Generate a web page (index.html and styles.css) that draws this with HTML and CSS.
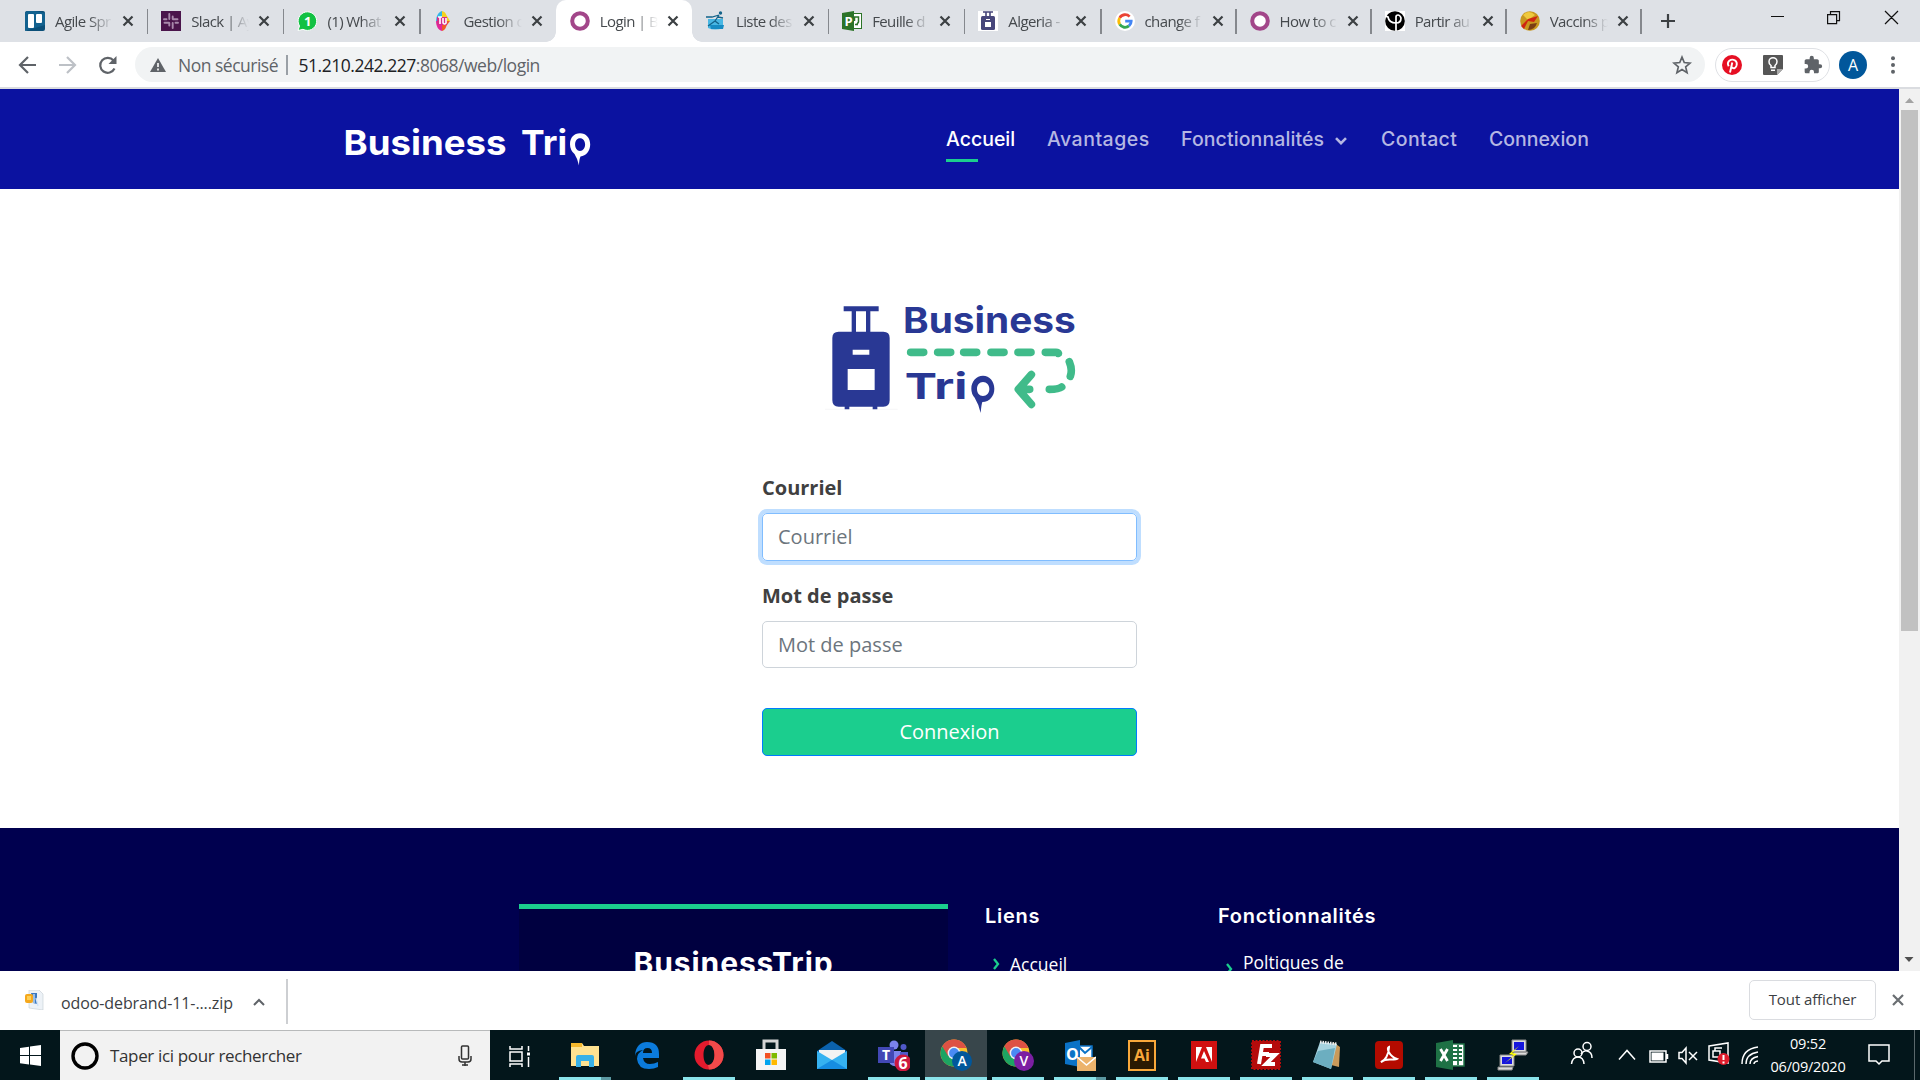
FILE: index.html
```html
<!DOCTYPE html>
<html lang="fr">
<head>
<meta charset="utf-8">
<title>Login | Business Trip</title>
<link rel="stylesheet" href="styles.css">
</head>
<body>
<svg class="defs" width="0" height="0">
  <symbol id="close" viewBox="0 0 12 12"><path d="M1.5 1.5l9 9M10.5 1.5l-9 9" stroke="#3c4043" stroke-width="2.2" fill="none"/></symbol>
  <symbol id="ring" viewBox="0 0 20 20"><circle cx="10" cy="10" r="7.8" fill="#fff" stroke="#a24689" stroke-width="4"/></symbol>
  <symbol id="chrome" viewBox="0 0 32 32">
    <circle cx="14" cy="14" r="13.5" fill="#fbc02d"/>
    <path d="M14 14L2.3 7.2A13.5 13.5 0 0 0 13 27.5l6-10z" fill="#1da462"/>
    <path d="M2.3 7.2A13.5 13.5 0 0 1 26.5 9H14L8 17z" fill="#dd5144"/>
    <circle cx="14" cy="14" r="6.4" fill="#f1f1f1"/><circle cx="14" cy="14" r="4.9" fill="#4a8af4"/>
  </symbol>
</svg>

<header class="tabs">
  <div class="tab"><svg class="fav" viewBox="0 0 20 20"><rect width="20" height="20" rx="2" fill="#0b4f78"/><path d="M0 20L20 14V2L10 0H2L0 2z" fill="#13628f"/><rect x="3" y="3" width="6" height="14" rx="1" fill="#fff"/><rect x="11" y="3" width="6" height="9" rx="1" fill="#fff"/></svg><span class="tt">Agile Spr</span><svg class="x"><use href="#close"/></svg></div>
  <div class="tab"><svg class="fav" viewBox="0 0 20 20"><rect width="20" height="20" fill="#4a154b"/><g stroke="#a98aac" stroke-width="1.900" stroke-linecap="round"><path d="M8.300 3v5M3 8.300h2.500M11.700 5.500v2.500M12 8.300h4.500M3.500 11.700h4.500M8.300 12v2.500M11.700 12v5M14.500 11.700h2.500"/></g></svg><span class="tt">Slack | Ay</span><svg class="x"><use href="#close"/></svg></div>
  <div class="tab"><svg class="fav" viewBox="0 0 20 20"><path d="M1 19.500L2.500 15A9.300 9.300 0 1 1 6 18.300z" fill="#12c143" stroke="#fff"/><text x="7" y="14.500" class="favtext">1</text></svg><span class="tt">(1) What</span><svg class="x"><use href="#close"/></svg></div>
  <div class="tab nosep"><svg class="fav" viewBox="0 0 20 20"><path d="M8 0C4 1 2 6 2 10h6z" fill="#35b5e8"/><path d="M8 0c4 1 4 4 5 5l3 5H8z" fill="#f4d21f"/><path d="M2 10c0 5 2 9 6 10V10z" fill="#e3259b"/><path d="M8 20c4-1 4-5 5-6l3-4H8z" fill="#ef5a28"/><path d="M3 6h10v8H3z" fill="#d62d8b"/><path d="M4 6h4M6 6v7M9 7v5q2 2 3 0V7" stroke="#fff" stroke-width="1.600" fill="none"/></svg><span class="tt">Gestion d</span><svg class="x"><use href="#close"/></svg></div>
  <div class="tab active"><svg class="fav"><use href="#ring"/></svg><span class="tt">Login | B</span><svg class="x"><use href="#close"/></svg></div>
  <div class="tab"><svg class="fav" viewBox="0 0 20 20"><path d="M2 8h15v9q-8 3-15 0z" fill="#48b7e4"/><path d="M4 14h14l-1 4H5z" fill="#168bc3"/><path d="M0 6l6 0 7-2M13 4L9 10l4 3M9 10L2 15M12 6l5 1" stroke="#12638a" stroke-width="1.300" fill="none"/><circle cx="14.500" cy="2" r="1.700" fill="#12638a"/></svg><span class="tt">Liste des</span><svg class="x"><use href="#close"/></svg></div>
  <div class="tab"><svg class="fav" viewBox="0 0 20 20"><rect x="9" y="2.500" width="10.500" height="15" fill="#fff" stroke="#2c7428"/><path d="M12.500 10V6h4v5l-2 3M13 13.500h3" stroke="#2c7428" stroke-width="1.500" fill="none"/><path d="M0 2L12 0v20L0 18z" fill="#2c7428"/><text x="2.500" y="14.500" class="favtext">P</text></svg><span class="tt">Feuille d</span><svg class="x"><use href="#close"/></svg></div>
  <div class="tab"><svg class="fav" viewBox="0 0 20 20"><path fill="#fff" d="M0 0h20v20H0z"/><path d="M5 1h10M8 1v5M12 1v5" stroke="#47467b" stroke-width="1.600"/><rect x="3" y="5" width="14" height="14" rx="1.500" fill="#47467b"/><path d="M7 11h6v5H7zM8 8h4v1H8z" fill="#fff"/></svg><span class="tt">Algeria -</span><svg class="x"><use href="#close"/></svg></div>
  <div class="tab late"><svg class="fav" viewBox="0 0 20 20"><circle cx="10" cy="10" r="10" fill="#fff"/><g fill="none" stroke-width="2.800"><path d="M14.600 5.600A6.200 6.200 0 0 0 4.700 6.900" stroke="#ea4335"/><path d="M4.700 6.900a6.200 6.200 0 0 0 0 6.400" stroke="#fbbc05"/><path d="M4.700 13.300a6.200 6.200 0 0 0 9.300 1.600" stroke="#34a853"/><path d="M14 14.900a6.200 6.200 0 0 0 2.200-4.700H10.200" stroke="#4285f4"/></g></svg><span class="tt">change f</span><svg class="x"><use href="#close"/></svg></div>
  <div class="tab late"><svg class="fav"><use href="#ring"/></svg><span class="tt">How to c</span><svg class="x"><use href="#close"/></svg></div>
  <div class="tab late"><svg class="fav" viewBox="0 0 20 20"><path fill="#fff" d="M0 0h20v20H0z"/><circle cx="10" cy="10" r="9.800" fill="#000"/><path d="M11 20V6q0-2 2-2t3 3q0 5-5 5-7 0-8-6L0 5" stroke="#fff" stroke-width="1.700" fill="none"/></svg><span class="tt">Partir au</span><svg class="x"><use href="#close"/></svg></div>
  <div class="tab late"><svg class="fav" viewBox="0 0 20 20"><circle cx="10" cy="10" r="9.800" fill="#c8971f"/><path d="M3 4q6-6 12 0l-7 5z" fill="#efc93d"/><path d="M1 15l7-7 10-3-4 6-6-1-4 8z" fill="#cf2412"/><path d="M10 13l7-1q-2 7-9 7z" fill="#7a3d14"/></svg><span class="tt">Vaccins p</span><svg class="x"><use href="#close"/></svg></div>
  <svg class="plus" width="16" height="16" viewBox="0 0 16 16"><path d="M8 1v14M1 8h14" stroke="#3c4043" stroke-width="2.200"/></svg>
  <svg class="winctl" width="130" height="16" viewBox="0 0 130 16" fill="none" stroke="#111" stroke-width="1.200"><path d="M0 7.500h13M56.600 5.600h9v9h-9zM59.500 5.500V2.600h9v9h-3M114 2l13 13M127 2l-13 13"/></svg>
</header>

<div class="toolbar">
  <svg class="navicons" width="135" height="36" viewBox="0 0 135 36" fill="none" stroke-width="2.200"><path d="M36 18H20M28 10l-8 8 8 8" stroke="#5f6368"/><path d="M59 18h16M67 10l8 8-8 8" stroke="#bdc1c6"/><path d="M114.500 21.500a7.500 7.500 0 1 1-1-8" stroke="#5f6368"/><path d="M116.500 9v8h-8z" fill="#5f6368"/></svg>
  <div class="omnibox">
    <svg width="16" height="14" viewBox="0 0 16 14"><path d="M8 0l8 14H0z" fill="#5f6368"/><path d="M8 5v4M8 10.500v2" stroke="#fff" stroke-width="1.600"/></svg>
    <span class="nonsec">Non sécurisé</span><i class="osep"></i><span class="url"><b>51.210.242.227</b>:8068/web/login</span>
    <svg class="star" width="20" height="20" viewBox="0 0 24 24"><path d="M12 2.500l2.700 6.600 7.100.6-5.400 4.600 1.700 7L12 17.500l-6.100 3.800 1.700-7-5.400-4.600 7.100-.6z" fill="none" stroke="#5f6368" stroke-width="2"/></svg>
  </div>
  <div class="exts">
    <svg width="20" height="20" viewBox="0 0 20 20"><circle cx="10" cy="10" r="10" fill="#e60f23"/><path d="M6.700 11.300Q4.800 8 7.300 5.800q2.700-2 5.500-.5 3 2 1.500 5.800-1.500 3-3.800 1.800l-1-1M10.300 7.500L8 17.500" stroke="#fff" stroke-width="1.900" fill="none"/></svg>
    <svg width="20" height="20" viewBox="0 0 20 20"><path d="M1 0h18q1 0 1 1v13l-6 6H1q-1 0-1-1V1q0-1 1-1z" fill="#565656"/><path d="M14 20v-6h6z" fill="#aaa"/><path d="M8 12.500v-2Q5.800 9 6 6.700a4 4 0 0 1 8 0Q14 9 12 10.500v2zM8 15.300h4" fill="none" stroke="#fff" stroke-width="1.500"/></svg>
    <svg width="20" height="20" viewBox="0 0 24 24"><path d="M20.500 11H19V7c0-1.100-.9-2-2-2h-4V3.500a2.500 2.500 0 0 0-5 0V5H4c-1.100 0-2 .9-2 2v3.800h1.500a2.700 2.700 0 0 1 0 5.400H2V20c0 1.100.9 2 2 2h3.800v-1.500a2.700 2.700 0 0 1 5.400 0V22H17c1.100 0 2-.9 2-2v-4h1.500a2.500 2.500 0 0 0 0-5z" fill="#5f6368"/></svg>
  </div>
  <div class="avatar">A</div>
  <svg class="dots" width="4" height="18" viewBox="0 0 4 18" fill="#5f6368"><circle cx="2" cy="2.300" r="2"/><circle cx="2" cy="9" r="2"/><circle cx="2" cy="15.700" r="2"/></svg>
</div>

<div class="viewport">
  <main class="page">
    <div class="site-header">
      <svg class="brand" width="260" height="50" viewBox="0 0 260 50" fill="#fff"><text x="9.500" y="30" textLength="163" lengthAdjust="spacingAndGlyphs">Business</text><text x="187" y="30" textLength="46" lengthAdjust="spacingAndGlyphs">Tri</text><path fill-rule="evenodd" d="M246 8.300c6 0 10.200 4.800 10.200 11.300S252 31 246.500 31.500q-1.500 3-1.500 9-1.500-7-4.500-11.500-4.500-4-4.500-9.800c0-6.500 4-10.900 10-10.900zm0 5c-3 0-4.900 2.700-4.900 6.200s1.900 6.400 4.900 6.400 5.100-2.900 5.100-6.400-2.100-6.200-5.100-6.200z"/></svg>
      <nav class="menu">
        <a class="on m1">Accueil</a><a class="m2">Avantages</a><a class="m3">Fonctionnalités</a><svg class="caret" width="12" height="8" viewBox="0 0 12 8"><path d="M1 1.200l5 5 5-5" stroke="#b5b7e3" stroke-width="2.600" fill="none"/></svg><a class="m4">Contact</a><a class="m5">Connexion</a>
      </nav>
    </div>
    <section class="login">
      <svg class="logo" width="320" height="150" viewBox="0 0 960 450">
        <path d="M75 388H293" stroke="#f2f2f4" stroke-width="2"/>
        <g fill="#293894"><path d="M131 79h105v15h-25v63h-13V94h-30v63h-13V94h-24z"/><path fill-rule="evenodd" d="M116 155h134q19 0 19 19v187q0 19-19 19h-18v8h-14v-8h-70v8h-14v-8h-18q-19 0-19-19V174q0-19 19-19zm42 54v15h50v-15zm-15 58v63h81v-63z"/>
        <text x="309" y="159" textLength="518" lengthAdjust="spacingAndGlyphs">Business</text><text x="314" y="357" textLength="188" lengthAdjust="spacingAndGlyphs">Tri</text>
        <path fill-rule="evenodd" d="M549 287c20 0 34 17 34 39s-14 39-36 40q-3 8-5 33-4-23-18-46-10-11-10-27c0-22 15-39 35-39zm0 19c-11 0-18 9-18 21s7 21 18 21 19-9 19-21-8-21-19-21z"/></g>
        <g fill="none" stroke="#40bb8a" stroke-width="23" stroke-linecap="round" stroke-linejoin="round"><path d="M332 217h39M413 217h39M491 217h39M573 217h39M654 217h39M736 217h32q6 0 7 3M808 245q10 24 3 44M785 321q-9 7-37 7M694 284l-39 44 39 45M660 328h29"/></g>
      </svg>
      <form class="form">
        <label>Courriel</label>
        <div class="field focus">Courriel</div>
        <label>Mot de passe</label>
        <div class="field second">Mot de passe</div>
        <div class="submit">Connexion</div>
      </form>
    </section>
    <footer class="footer">
      <div class="card"><h3>BusinessTrip</h3></div>
      <div class="col c1"><h4>Liens</h4><p><svg width="7" height="12" viewBox="0 0 7 12"><path d="M1 1l4 5-4 5" stroke="#1bce8e" stroke-width="2.300" fill="none"/></svg><span>Accueil</span></p></div>
      <div class="col c2"><h4>Fonctionnalités</h4><p><svg width="7" height="12" viewBox="0 0 7 12"><path d="M1 1l4 5-4 5" stroke="#1bce8e" stroke-width="2.300" fill="none"/></svg><span>Poltiques de</span></p></div>
    </footer>
  </main>
  <div class="scroll"><svg width="21" height="21" viewBox="0 0 21 21"><path d="M6 14l4.500-5 4.500 5z" fill="#a3a3a3"/></svg><div class="thumb"></div><svg class="down" width="21" height="21" viewBox="0 0 21 21"><path d="M5.500 7l4.500 5 4.500-5z" fill="#505050"/></svg></div>
</div>

<div class="downloads">
  <svg class="zip" width="20" height="20" viewBox="0 0 20 20"><path d="M4 0h10l4 4v16L4 18z" fill="#edf2f7" stroke="#c4ccd3" stroke-width=".6"/><path d="M6 3h6v11l-4-1z" fill="#3a79c2"/><path d="M9 4v9M11 8l2 8" stroke="#cfe2f8" stroke-width="1.300"/><rect y="4" width="8" height="9" rx="2" fill="#f5a81c"/><path d="M2 6h4v4H2z" fill="#ffcf55"/></svg>
  <span class="fname">odoo-debrand-11-....zip</span>
  <svg class="up" width="12" height="8" viewBox="0 0 12 8"><path d="M1 7l5-5 5 5" stroke="#5f6368" stroke-width="2" fill="none"/></svg>
  <i class="dsep"></i>
  <span class="showall">Tout afficher</span>
  <svg class="dx" width="12" height="12" viewBox="0 0 12 12"><path d="M1 1l10 10M11 1L1 11" stroke="#6a6e72" stroke-width="2.200"/></svg>
</div>

<div class="taskbar">
  <div class="start"><svg width="21" height="21" viewBox="0 0 21 21" fill="#fff"><path d="M0 3l9-1.300V10H0zM10 1.500L21 0v10H10zM0 11h9v8.500L0 18.200zM10 11h11v10l-11-1.500z"/></svg></div>
  <div class="search"><svg width="28" height="28" viewBox="0 0 28 28"><circle cx="14" cy="14" r="12" fill="none" stroke="#000" stroke-width="3.400"/></svg><span>Taper ici pour rechercher</span><svg class="mic" width="14" height="21" viewBox="0 0 14 21" fill="none" stroke="#333" stroke-width="1.500"><rect x="3.500" y="1" width="7" height="13" rx="1"/><path d="M1 11v3q0 3 3 3h6q3 0 3-3v-3M7 17v4M4 20h6"/></svg></div>
  <div class="taskview"><svg width="22" height="22" viewBox="0 0 22 22" fill="none" stroke="#fff" stroke-width="1.500"><path d="M1 1v3h12V1M1 7h12v9H1zM1 22v-3h12v3M19.500 1v5M19.500 12v10"/><path d="M18 7.500h3v3h-3z" fill="#fff" stroke="none"/></svg></div>
  <div class="apps">
    <div class="app run multi"><svg viewBox="0 0 32 32"><path d="M2 4h11l2 3h15v20H2z" fill="#ffe391"/><path d="M2 4h11v4H2z" fill="#f6b92d"/><path d="M7 28V18q0-2 2-2h14q2 0 2 2v10h-5v-6h-8v6z" fill="#38b1e7"/></svg></div>
    <div class="app"><svg viewBox="0 0 32 32"><path d="M4 15Q6 3 16 3q12 0 12 12v4H12q1 6 7 6 4 0 8-2v5q-4 2-9 2-11 0-12-10 0-6 6-9-8 1-8 6zM12 14h9q0-5-4.500-5T12 14z" fill="#0b7bdc" fill-rule="evenodd"/></svg></div>
    <div class="app run"><svg viewBox="0 0 32 32"><path fill-rule="evenodd" d="M16 1.500a14.500 14.500 0 1 0 0 29 14.500 14.500 0 0 0 0-29zm0 4.500c3.500 0 5.500 4.500 5.500 10S19.500 26 16 26s-5.500-4.500-5.500-10S12.500 6 16 6z" fill="#e31b2d"/><path d="M16 1.500a14.500 14.500 0 0 1 0 29l-1-4.600c4 0 6.500-4.400 6.500-9.900S19 6 16 6z" fill="#f24a4a"/></svg></div>
    <div class="app"><svg viewBox="0 0 32 32"><path d="M9 11V2h13v9" fill="none" stroke="#d5d5d5" stroke-width="3"/><path d="M1 10h30v21H1z" fill="#f5f5f5"/><path d="M10 14h5.500v5.500H10z" fill="#f25022"/><path d="M16.500 14H22v5.500h-5.500z" fill="#7fba00"/><path d="M10 20.500h5.500V26H10z" fill="#00a4ef"/><path d="M16.500 20.500H22V26h-5.500z" fill="#ffb900"/></svg></div>
    <div class="app"><svg viewBox="0 0 32 32"><path d="M1 12L16 2l15 10v18H1z" fill="#0b62ad"/><path d="M3 11h26v12H3z" fill="#f3f3f3"/><path d="M1 12l15 9 15-9v18H1z" fill="#36b2f1"/><path d="M1 30l15-9 15 9z" fill="#168de2"/></svg></div>
    <div class="app run"><svg viewBox="0 0 32 32"><circle cx="16" cy="6" r="4.500" fill="#7b83eb"/><circle cx="25.500" cy="8" r="3" fill="#5059c9"/><path d="M9 12h14v12q-5 6-11 1z" fill="#7b83eb"/><path d="M22 13h8v10h-8z" fill="#5059c9"/><path d="M0 8h16v16H0z" fill="#4248b5"/><text x="4" y="21" class="t14">T</text><circle cx="25" cy="24" r="8.500" fill="#cc193f"/><text x="20.500" y="30" class="t16">6</text></svg></div>
    <div class="app run current"><svg viewBox="0 0 32 32"><use href="#chrome"/><circle cx="22" cy="22" r="10" fill="#01579b"/><text x="17.500" y="27" class="t14n">A</text></svg></div>
    <div class="app run"><svg viewBox="0 0 32 32"><use href="#chrome"/><circle cx="22" cy="22" r="10" fill="#7b1fa2"/><text x="17.500" y="27" class="t14n">V</text></svg></div>
    <div class="app run multi"><svg viewBox="0 0 32 32"><path d="M14 7h14v14H14z" fill="#fff" stroke="#0b72c6" stroke-width="1.500"/><path d="M15 8l6 6 7-6" fill="none" stroke="#0b72c6" stroke-width="2"/><path d="M1 4l15-3v27L1 25z" fill="#0b72c6"/><text x="2" y="21" class="t16">O</text><path d="M13 18h19v14H13z" fill="#ecb36c"/><path d="M13 18l9.500 8 9.500-8" fill="none" stroke="#fff" stroke-width="1.500"/></svg></div>
    <div class="app run"><svg viewBox="0 0 32 32"><path d="M3 3h26v29H3z" transform="translate(0 -1)" fill="#2a1a02" stroke="#f9a83a" stroke-width="2"/><text x="8" y="22" class="t16 orange">Ai</text></svg></div>
    <div class="app run"><svg viewBox="0 0 32 32"><path d="M3 2h26v28H3z" fill="#d01010"/><path d="M8 8h6l-6 15zM24 8h-6l6 15zM16 12l5 11h-3l-1.500-3.500H13z" fill="#fff"/></svg></div>
    <div class="app run"><svg viewBox="0 0 32 32"><path d="M2 2h28v28H2z" fill="#b50b0b" stroke="#b50b0b" stroke-width="2" stroke-dasharray="2 1.500"/><path d="M9 25L12 7h10M11 15h8M16 16h9l-9 9h9" fill="none" stroke="#fff" stroke-width="4"/></svg></div>
    <div class="app run"><svg viewBox="0 0 32 32"><path d="M22 3l7 5-1 20-8-2z" fill="#c99a5a"/><path d="M9 3l17 2-6 25-18-7z" fill="#a6d3df"/><path d="M7 12l17-3-4 21-18-7z" fill="#6caec0"/><path d="M9 3l17 2" stroke="#eee" stroke-width="3" stroke-dasharray="1.500 1"/></svg></div>
    <div class="app run"><svg viewBox="0 0 32 32"><rect x="2" y="2" width="28" height="28" rx="4" fill="#b30b00"/><path d="M8 23c4-1 8-8 8-15-3 1 0 9 8 12-3 2-10-2-16 3z" fill="none" stroke="#fff" stroke-width="2"/></svg></div>
    <div class="app run"><svg viewBox="0 0 32 32"><path d="M16 5h13v22H16z" fill="#fff" stroke="#1e7145" stroke-width="1.500"/><path d="M17 9h10M17 13h10M17 17h10M17 21h10M23 6v20" stroke="#1e7145" stroke-width="1.800"/><path d="M1 4l17-3v30L1 28z" fill="#1e7145"/><path d="M5.500 10l7 12M12.500 10l-7 12" stroke="#fff" stroke-width="2.800"/></svg></div>
    <div class="app run"><svg viewBox="0 0 32 32"><g stroke="#888" fill="#ddd"><path d="M15 1h14v12H15zM17 13h14l-2 3H15zM3 16h14v11H3zM1 28h15l-1 3H1z"/></g><path d="M17 3h10v8H17zM5 18h10v7H5z" fill="#1616dd"/><path d="M22 7l-10 8 5 1-9 8 12-9-5-1z" fill="#ff0"/></svg></div>
  </div>
  <svg class="tray" width="210" height="32" viewBox="0 0 210 32" fill="none" stroke="#fff" stroke-width="1.500"><circle cx="18" cy="7.500" r="4"/><circle cx="9" cy="14" r="4"/><path d="M2.500 25q1-7 6.500-7t6 7M12 15q3-4 6-3 5 1 5 7M50 20.500l8-9 8 9M81 12h16v11H81zM98.500 15v5"/><path d="M82.500 13.500h12v8h-12z" fill="#fff" stroke="none"/><path d="M110 13.500v6h3l4 4.500V9l-4 4.500zM120 13l8 8M128 13l-8 8M140 7l19-3v20l-19-3zM144 18v-6h7v6zM146 12V9h7"/><circle cx="154.500" cy="20" r="6" fill="#e01c2c" stroke="none"/><path d="M154.500 16v5M154.500 22.500v2" stroke-width="2"/><path d="M173 25Q173 10 189 8M177 25q0-10 12-12M181 25q0-6 8-7.500M185 25q0-2.500 4-3"/></svg>
  <div class="clock"><span>09:52</span><span>06/09/2020</span></div>
  <svg class="notif" width="22" height="22" viewBox="0 0 22 22"><path d="M1 1h20v16h-7l-3 3-3-3H1z" fill="none" stroke="#fff" stroke-width="1.500"/></svg>
  <i class="edge"></i>
</div>
</body>
</html>
```
FILE: styles.css
```css
* { box-sizing: border-box; }
body { margin: 0; width: 1920px; height: 1080px; overflow: hidden; display: flex; flex-direction: column; background: #fff; font-family: "Open Sans", "Noto Sans", sans-serif; }
svg { display: block; flex: none; }
.defs { display: none; }
span, a, h3, h4, label { white-space: nowrap; }

/* browser tabs */
.tabs { height: 42px; flex: none; background: #dee1e6; display: flex; padding-left: 11px; }
.tab { position: relative; width: 136.2px; flex: none; height: 42px; padding-left: 14px; display: flex; align-items: center; }
.tab.late { width: 135.1px; }
.tab::after { content: ""; position: absolute; right: -1px; top: 9px; width: 1.5px; height: 25px; background: #85888d; }
.tab.nosep::after, .tab.active::after { display: none; }
.tab.active { background: #fff; border-radius: 10px 10px 0 0; }
.tab.active::before { content: ""; position: absolute; left: -10px; right: -10px; bottom: 0; height: 10px; background: radial-gradient(circle at 0 0, transparent 9.5px, #fff 10px) left / 10px 10px no-repeat, radial-gradient(circle at 100% 0, transparent 9.5px, #fff 10px) right / 10px 10px no-repeat; }
.fav { width: 20px; height: 20px; }
.favtext { font: bold 13px "Open Sans", sans-serif; fill: #fff; }
.tt { width: 58px; margin-left: 10px; overflow: hidden; font-size: 15px; letter-spacing: -0.6px; color: #45494d; mask-image: linear-gradient(90deg, #000 58%, transparent 100%); }
.x { width: 12px; height: 12px; margin-left: 9px; }
.plus { margin: 13px 0 0 19px; }
.winctl { margin: 9px 19px 0 auto; }

/* address bar */
.toolbar { height: 47px; flex: none; border-bottom: 2px solid #dadce0; display: flex; align-items: center; }
.omnibox { width: 1570px; height: 35px; border-radius: 18px; background: #f1f3f4; display: flex; align-items: center; padding: 0 13px 0 15px; font-size: 17.5px; color: #5f6368; }
.nonsec { width: 99px; margin-left: 12px; letter-spacing: -0.5px; }
.osep { width: 1.500px; height: 20px; margin: 0 11px 0 9px; background: #9aa0a6; }
.url { letter-spacing: -0.47px; }
.url b { font-weight: 400; color: #202124; }
.star { margin-left: auto; }
.exts { margin-left: 10px; width: 115px; height: 34px; border: 1.500px solid #dfe1e5; border-radius: 17px; display: flex; align-items: center; justify-content: space-between; padding: 0 6px; }
.avatar { margin-left: 9px; width: 28px; height: 28px; border-radius: 50%; background: #01579b; color: #fff; font-size: 16px; line-height: 28px; text-align: center; }
.dots { margin-left: 24px; }

/* page */
.viewport { height: 882px; flex: none; display: flex; }
.page { width: 1899px; height: 882px; overflow: hidden; }
.scroll { width: 21px; background: #f1f1f1; display: flex; flex-direction: column; }
.thumb { margin-left: 2px; width: 17px; height: 521px; background: #c1c1c1; }
.down { margin-top: auto; }
.site-header { height: 100px; background: #0b12a0; display: flex; padding-left: 334px; }
.brand { margin-top: 36px; font: bold 34.5px Inter, sans-serif; }
.menu { margin: 36px 0 0 352px; display: flex; height: 38px; font: 500 19.5px/28px Inter, sans-serif; color: #b5b7e3; }
.m1 { width: 101px; }
.m2 { width: 134px; letter-spacing: 0.5px; }
.m3 { width: 154px; letter-spacing: 0.1px; }
.m4 { width: 108px; margin-left: 34px; letter-spacing: 0.4px; }
.caret { margin-top: 12px; }
.on { position: relative; color: #fff; }
.on::after { content: ""; position: absolute; left: 0; top: 34px; width: 32px; height: 3px; background: #1bce8e; }

.login { height: 639px; padding-top: 91px; display: flex; flex-direction: column; }
.logo { margin-left: 800px; font: bold 106px Inter, sans-serif; }
.form { width: 375px; margin: 42px 0 0 762px; display: flex; flex-direction: column; font-size: 20px; }
label { font-weight: 700; color: #404040; line-height: 30px; height: 41px; padding-top: 1px; }
.field { height: 48px; margin-bottom: 19px; border: 1px solid #ced4da; border-radius: 5px; padding-left: 15px; line-height: 45px; color: #6c757d; }
.field.second { height: 47px; }
.focus { border-color: #80bdff; box-shadow: 0 0 0 4px #bfdeff; }
.submit { height: 48px; margin-top: 21px; border: 1px solid #007bff; border-radius: 5px; background: #1bce8e; color: #fff; text-align: center; line-height: 45px; }

.footer { height: 300px; background: #00004f; padding: 76px 0 0 519px; display: flex; }
.card { width: 429px; height: 220px; background: #000040; border-top: 5px solid #1bce8e; text-align: center; }
.card h3 { margin: 36px 0 0; color: #fff; font: bold 30px/36px Inter, sans-serif; letter-spacing: 0.9px; }
.col { color: #fff; }
.c1 { width: 233px; margin-left: 37px; }
h4 { margin: 0; font: 600 20px/25px Inter, sans-serif; letter-spacing: 0.7px; }
.col p { margin: 23px 0 0 8px; display: flex; align-items: center; font-size: 17.500px; line-height: 24px; }
.col p span { margin-left: 10px; }
.c2 p { margin-top: 19px; }
.c2 p svg { margin-top: 15px; }

/* download shelf */
.downloads { height: 59px; flex: none; display: flex; padding-left: 25px; color: #3c4043; font-size: 16px; }
.zip { margin-top: 19px; }
.fname { width: 192px; margin: 21px 0 0 16px; letter-spacing: -0.1px; }
.up { margin-top: 27px; }
.dsep { width: 1.500px; height: 45px; margin: 8px 0 0 21px; background: #cdcfd2; }
.showall { margin: 9px 0 0 auto; width: 127px; height: 40px; border: 1px solid #dadce0; border-radius: 5px; text-align: center; line-height: 37px; font-size: 15px; letter-spacing: -0.1px; }
.dx { margin: 23px 16px 0; }

/* taskbar */
.taskbar { height: 50px; flex: none; background: #03161b; display: flex; }
.start { width: 60px; padding: 15px 0 0 20px; }
.search { width: 430px; background: #f2f2f2; border-top: 1px solid #b8babb; display: flex; align-items: center; padding: 0 18px 0 11px; font-size: 17px; letter-spacing: -0.35px; color: #333; }
.search span { margin-left: 11px; }
.mic { margin-left: auto; }
.taskview { width: 64px; padding: 15px 0 0 19px; }
.apps { width: 990px; display: grid; grid-template-columns: repeat(16, 1fr); }
.app { position: relative; padding-top: 9px; }
.app svg { width: 32px; height: 32px; margin: 0 auto; }
.run::after { content: ""; position: absolute; left: 5px; right: 5px; bottom: 0; height: 3px; background: #8ae3ea; }
.run.multi::after { background: linear-gradient(90deg, #8ae3ea 80%, #5b98a1 80%); }
.current { background: #38464b; }
.run.current::after { left: 0; right: 0; }
.t14 { font: bold 14px "Open Sans", sans-serif; fill: #fff; }
.t14n { font: 600 14px "Open Sans", sans-serif; fill: #fff; }
.t16 { font: bold 16px "Open Sans", sans-serif; fill: #fff; }
.orange { fill: #f9a83a; }
.tray { margin: 9px 0 0 25px; }
.clock { width: 90px; margin-left: -16px; padding-top: 2px; display: flex; flex-direction: column; align-items: center; color: #fff; font-size: 14.500px; line-height: 23px; letter-spacing: -0.2px; }
.notif { margin: 14px 0 0 15px; }
.edge { width: 1px; margin-left: 24px; background: #5a686c; }
```
